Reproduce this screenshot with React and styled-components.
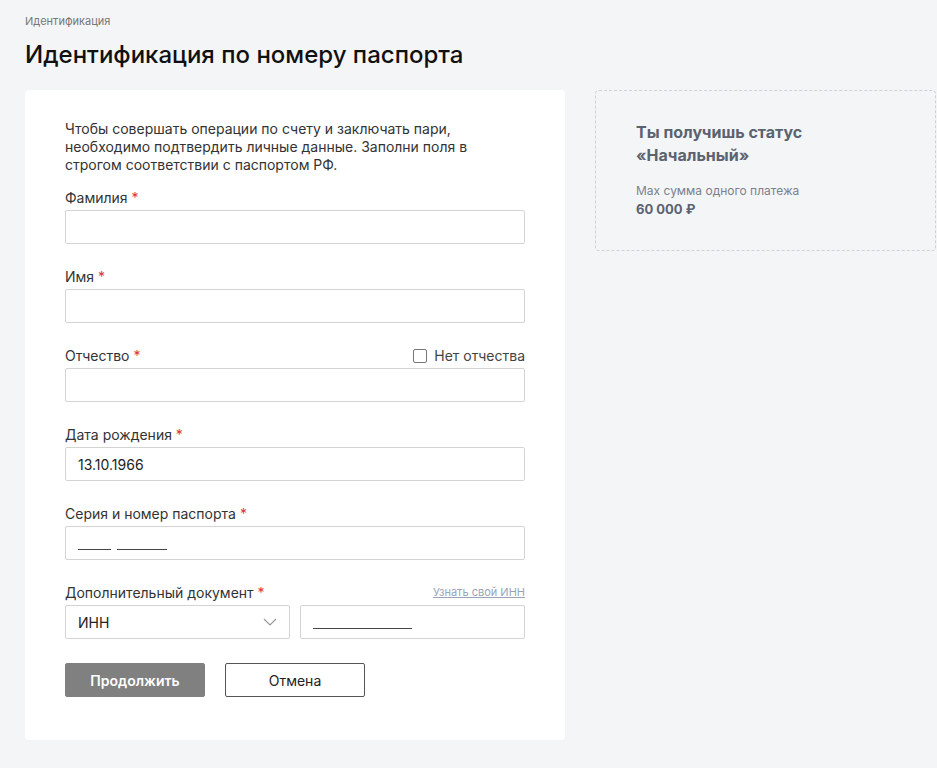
import React from "react";
import styled, { createGlobalStyle } from "styled-components";

const Global = createGlobalStyle`
  body { margin: 0; background: #f4f5f7; font-family: Inter, "Noto Sans", sans-serif; color: #1f1f1f; }
`;

const Page = styled.div`
  padding: 14px 25px 20px;
`;

const Crumb = styled.div`
  font-size: 11px;
  color: #777;
  line-height: 14px;
`;

const Title = styled.h1`
  margin: 11px 0 19px;
  font-size: 24px;
  font-weight: 500;
  line-height: 32px;
  color: #111;
`;

const Columns = styled.div`
  display: flex;
  align-items: flex-start;
  gap: 30px;
`;

const Card = styled.div`
  width: 540px;
  flex-shrink: 0;
  box-sizing: border-box;
  background: #fff;
  border-radius: 4px;
  padding: 30px 40px 43px;
`;

const Intro = styled.p`
  margin: 0 0 15px;
  font-size: 14px;
  line-height: 18px;
  color: #333;
  width: 420px;
`;

const Field = styled.div`
  margin-bottom: 24px;
`;

const LabelRow = styled.div`
  display: flex;
  justify-content: space-between;
  align-items: flex-end;
  font-size: 14px;
  line-height: 17px;
  color: #333;
  margin-bottom: 4px;
`;

const Star = styled.span`
  color: #e0303a;
`;

const Check = styled.label`
  display: flex;
  align-items: center;
  gap: 7px;
  color: #444;
  span {
    width: 12px;
    height: 12px;
    border: 1px solid #777;
    border-radius: 2px;
  }
`;

const Link = styled.a`
  font-size: 11px;
  color: #9aa4b5;
  text-decoration: underline;
`;

const Input = styled.div`
  height: 34px;
  box-sizing: border-box;
  border: 1px solid #d4d4d4;
  border-radius: 2px;
  padding: 0 12px;
  display: flex;
  align-items: center;
  justify-content: ${p => (p.select ? "space-between" : "flex-start")};
  gap: 6px;
  font-size: 14px;
  color: #222;
  flex: 1;
`;

const Mask = styled.i`
  display: inline-block;
  width: ${p => p.w}px;
  border-bottom: 1px solid #444;
  margin-top: 12px;
`;

const Row = styled.div`
  display: flex;
  gap: 10px;
`;

const Buttons = styled.div`
  display: flex;
  gap: 20px;
  margin-top: 2px;
`;

const Button = styled.button`
  width: 140px;
  height: 34px;
  border-radius: 2px;
  font-family: inherit;
  font-size: 14px;
  font-weight: ${p => (p.primary ? 600 : 400)};
  background: ${p => (p.primary ? "#808080" : "#fff")};
  color: ${p => (p.primary ? "#fff" : "#222")};
  border: 1px solid ${p => (p.primary ? "#808080" : "#555")};
`;

const Side = styled.div`
  width: 341px;
  flex-shrink: 0;
  box-sizing: border-box;
  border: 1px dashed #cfd2d8;
  border-radius: 4px;
  padding: 30px 40px 31px;
  color: #5b6270;
`;

const SideTitle = styled.div`
  font-size: 16px;
  font-weight: 700;
  line-height: 23px;
  margin-bottom: 16px;
`;

const SideSmall = styled.div`
  font-size: 12px;
  color: #7b818c;
  line-height: 16px;
`;

const SideValue = styled.div`
  font-size: 13px;
  font-weight: 700;
  line-height: 20px;
`;

const Lbl = ({ children }) => (
  <span>
    {children} <Star>*</Star>
  </span>
);

export default function App() {
  return (
    <Page>
      <Global />
      <Crumb>Идентификация</Crumb>
      <Title>Идентификация по номеру паспорта</Title>
      <Columns>
        <Card>
          <Intro>
            Чтобы совершать операции по счету и заключать пари, необходимо подтвердить личные данные. Заполни поля в
            строгом соответствии с паспортом РФ.
          </Intro>
          <Field>
            <LabelRow><Lbl>Фамилия</Lbl></LabelRow>
            <Input />
          </Field>
          <Field>
            <LabelRow><Lbl>Имя</Lbl></LabelRow>
            <Input />
          </Field>
          <Field>
            <LabelRow>
              <Lbl>Отчество</Lbl>
              <Check><span />Нет отчества</Check>
            </LabelRow>
            <Input />
          </Field>
          <Field>
            <LabelRow><Lbl>Дата рождения</Lbl></LabelRow>
            <Input>13.10.1966</Input>
          </Field>
          <Field>
            <LabelRow><Lbl>Серия и номер паспорта</Lbl></LabelRow>
            <Input><Mask w={33} /><Mask w={50} /></Input>
          </Field>
          <Field>
            <LabelRow>
              <Lbl>Дополнительный документ</Lbl>
              <Link>Узнать свой ИНН</Link>
            </LabelRow>
            <Row>
              <Input select>
                ИНН
                <svg width="14" height="8" viewBox="0 0 14 8" fill="none" stroke="#999" strokeWidth="1.2">
                  <path d="M1 1l6 6 6-6" />
                </svg>
              </Input>
              <Input><Mask w={99} /></Input>
            </Row>
          </Field>
          <Buttons>
            <Button primary>Продолжить</Button>
            <Button>Отмена</Button>
          </Buttons>
        </Card>
        <Side>
          <SideTitle>Ты получишь статус<br />«Начальный»</SideTitle>
          <SideSmall>Max сумма одного платежа</SideSmall>
          <SideValue>60 000 ₽</SideValue>
        </Side>
      </Columns>
    </Page>
  );
}
